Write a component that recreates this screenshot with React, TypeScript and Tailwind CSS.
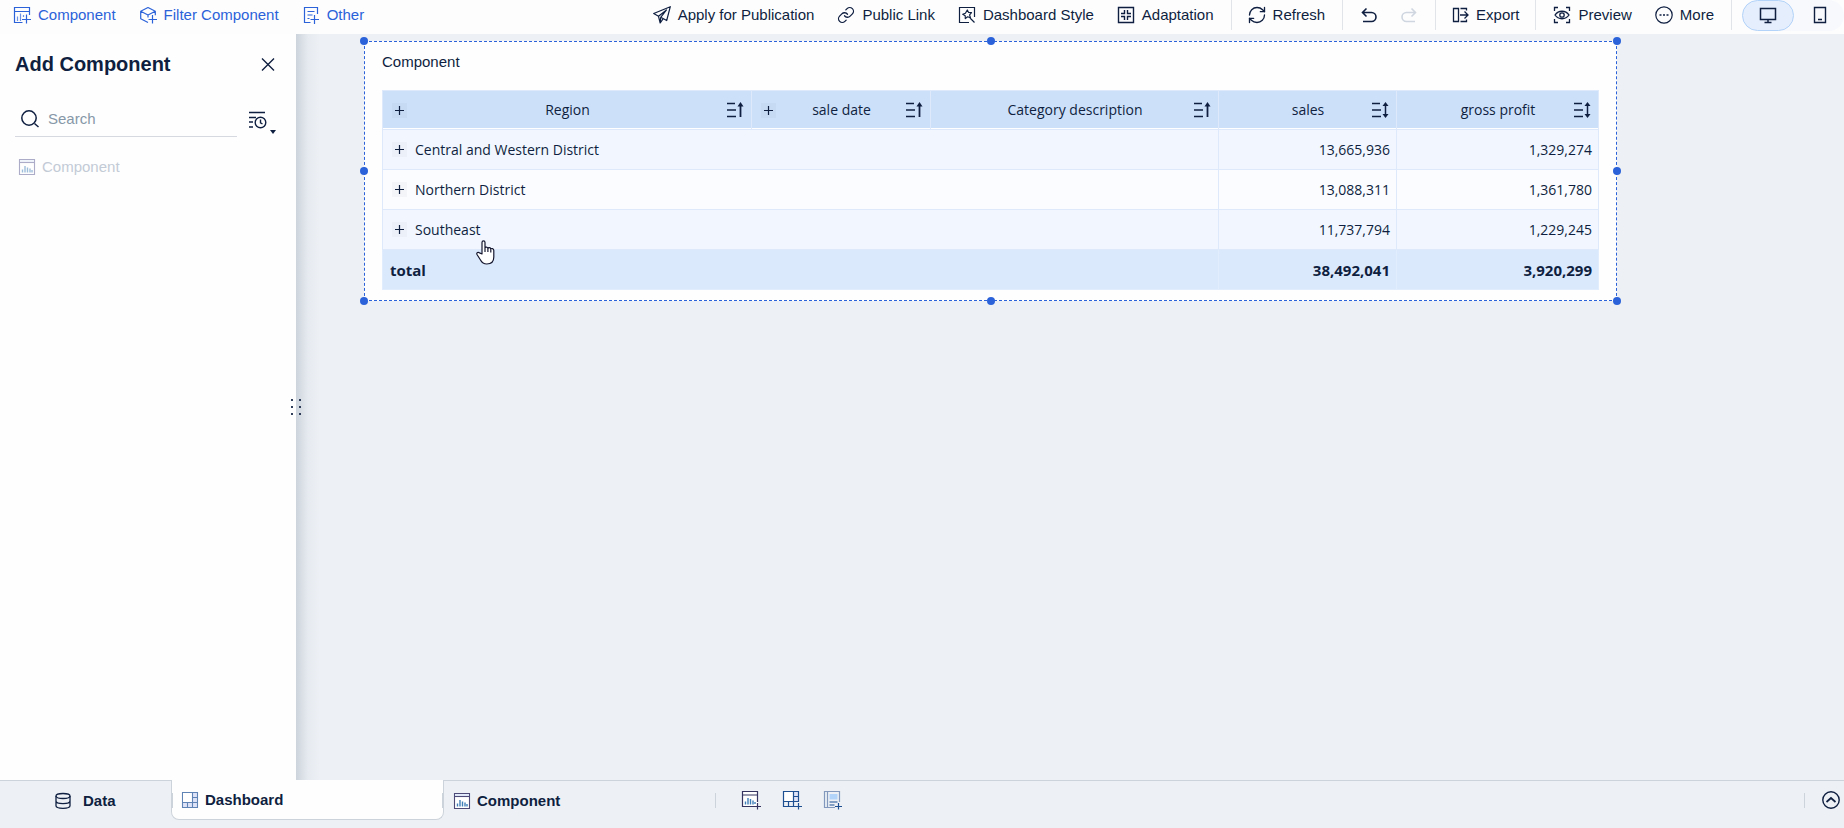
import { useState } from "react";
import type { ReactNode } from "react";
import { Link, RefreshCw } from "lucide-react";

type IconProps = { size?: number; children: ReactNode; width?: number };

function Icon({ size = 16, width = 1.2, children }: IconProps) {
	return (
		<svg
			width={size}
			height={size}
			viewBox={`0 0 ${size} ${size}`}
			fill="none"
			stroke="currentColor"
			strokeWidth={width}
			className="shrink-0 overflow-visible"
			aria-hidden="true"
		>
			{children}
		</svg>
	);
}

const AddChartIcon = () => (
	<Icon>
		<path d="M15.500 8V.500H.500v15h8M.500 4.500h15M12.500 7.500v9M8 12.500h9" />
		<path d="M3.500 14V9.500M6.500 14V6.500M9.500 10V8" opacity="0.7" />
	</Icon>
);

const AddFilterIcon = () => (
	<Icon>
		<path d="M8 15.500.700 11.700V4.200L8 .500l7.300 3.700v4M.700 4.200 8 8l7.300-3.800M8 8v2.500M12.500 8v8.500M8.500 12.500h8.500" strokeLinejoin="round" />
	</Icon>
);

const AddOtherIcon = () => (
	<Icon>
		<path d="M14.500 7V.500H1.500v15h6M4.500 4.500h7M4.500 8h5M4.500 11.500h2M11.500 8v9M7.500 12.500h8.500" />
	</Icon>
);

const SendIcon = () => (
	<Icon size={18}>
		<path d="M17.300.700.700 7.500l4.800 2.800 8-6.300-5.800 7.300 6 3.200zM7.700 11.300 7.200 17l3-4.400M5.500 10.300l1.700 6.700" strokeLinejoin="round" />
	</Icon>
);

const StyleIcon = () => (
	<Icon>
		<path d="M15.500 10V.500H.500v15H10" />
		<path d="m8.300 3 1.300 2.500 2.900.2-1.900 2.200.8 2.800-2.800-.9-2.300 1.800-.1-2.900L3.700 7.300l2.700-1.100zM11 11l4.500 4.500" strokeLinejoin="round" width="1.400" />
	</Icon>
);

const AdaptIcon = () => (
	<Icon width={1.400}>
		<path d="M.500.500h15v15H.500zM6.500 3v3.500H3M9.500 3v3.500H13M6.500 13V9.500H3M9.500 13V9.500H13" />
	</Icon>
);

const UndoIcon = () => (
	<Icon width={1.600}>
		<path d="M5.500 1.500 1.500 5.500l4 4M1.800 5.500h8.700a4.500 4.500 0 0 1 0 9H2" />
	</Icon>
);

const RedoIcon = () => (
	<Icon width={1.600}>
		<path d="m10.500 1.500 4 4-4 4M14.200 5.500H5.500a4.500 4.500 0 0 0 0 9H14" />
	</Icon>
);

const ExportIcon = () => (
	<Icon width={1.300}>
		<path d="M6.500 1.500h-5v13h5zM8.500 1.500h6v2M8.500 14.500h6v-2M8 8h8M12.500 4.500 16 8l-3.500 3.500" />
	</Icon>
);

const PreviewIcon = () => (
	<Icon width={1.300}>
		<path d="M.500 4V.500H4M12 .500h3.500V4M.500 12v3.500H4M12 15.500h3.500V12M1 8c3.500-5 10.500-5 14 0-3.500 5-10.500 5-14 0z" />
		<circle cx="8" cy="8" r="2.200" />
	</Icon>
);

const MoreIcon = () => (
	<Icon size={18}>
		<circle cx="9" cy="9" r="8.200" />
		<path d="M4.500 9h2M8 9h2M11.500 9h2" strokeWidth="1.600" />
	</Icon>
);

const DesktopIcon = () => (
	<Icon width={1.500}>
		<path d="M.500 1.500h15v11H.500zM8 12.500v3M4.500 15.500h7" />
	</Icon>
);

const PhoneIcon = () => (
	<Icon width={1.400}>
		<path d="M2.500.500h11v15h-11zM6 12.500h4" />
	</Icon>
);

const ChartIcon = () => (
	<Icon width={1.100}>
		<path d="M.500.500h15v15H.500z" fill="white" />
		<path d="M1 1h14v2.500H1z" fill="#e3ecfa" stroke="none" />
		<path d="M.500 3.500h15" />
		<path d="M3.500 13.500v-3M6 13.500V7M8.500 13.500V8.500M11 13.500v-4M13 13.500v-2.500" stroke="#3f7fb8" strokeWidth="1.400" />
	</Icon>
);

const GridIcon = () => (
	<Icon width={1.100}>
		<path d="M.500.500h15v15H.500z" fill="#dfe3f8" />
		<path d="M1 1h9.500v9.500H1z" fill="white" stroke="none" />
		<path d="M10.500.500v10M.500 10.500h15M10.500 5.500h5M5.500 10.500v5M10.500 10.500v5" />
	</Icon>
);

const DatabaseIcon = () => (
	<Icon width={1.300}>
		<ellipse cx="8" cy="3" rx="7" ry="2.500" />
		<path d="M1 3v9.800c0 1.400 3 2.500 7 2.500s7-1.100 7-2.500V3M1 8c0 1.400 3 2.600 7 2.600S15 9.400 15 8" />
	</Icon>
);

const NewChartIcon = () => (
	<Icon size={18} width={1.200}>
		<path d="M.500.500h15v15H.500z" fill="white" stroke="none" />
		<path d="M15.500 11V.500H.500v15H12M.500 4h15M15.500 12v6.500M12 15.500h7" />
		<path d="M3.500 13.500v-3M6 13.500V7M8.500 13.500V8M11 13.500V9.500M13 13v-2" stroke="#3f7fb8" strokeWidth="1.400" />
	</Icon>
);

const NewGridIcon = () => (
	<Icon size={18} width={1.200}>
		<path d="M11 1h5v9h-5z" fill="#dfe3f8" stroke="none" />
		<path d="M1 1h10v10H1z" fill="white" stroke="none" />
		<path d="M15.500 11V.500H.500v15H12M10.500.500v10M.500 10.500h15M10.500 5.500h5M5.500 10.500v5M10.500 10.500v5M15.500 12v6.500M12 15.500h7" />
	</Icon>
);

const NewReportIcon = () => (
	<Icon size={18} width={1.200}>
		<path d="M15.500 11V.500H.500v16H11M3.500.500v16" stroke="#8299bd" />
		<path d="M5.500 3h8v5.500h-8z" fill="#b3d4fa" stroke="none" />
		<path d="M5.500 11h8M5.500 14h5M14.500 12v6.500M11 15.500h7" />
	</Icon>
);

function SortIcon({ both }: { both?: boolean }) {
	return (
		<Icon width={1.500}>
			<path d="M0 1.500h8M0 8h9M0 14.500h9" />
			{both ? (
				<>
					<path d="M13.500 2v12" />
					<path d="m13.500 0 3 4h-6zM13.500 16l3-4h-6z" fill="currentColor" stroke="none" />
				</>
			) : (
				<>
					<path d="M13.500 3v12" strokeWidth="1.800" />
					<path d="m13.500 0 3 4.500h-6z" fill="currentColor" stroke="none" />
				</>
			)}
		</Icon>
	);
}

function ExpandButton({ label }: { label: string }) {
	return (
		<button
			type="button"
			aria-label={`Expand ${label}`}
			className="flex h-[15px] w-[15px] shrink-0 items-center justify-center bg-[#1f2937]/3"
		>
			<svg width="9" height="9" viewBox="0 0 9 9" stroke="currentColor" strokeWidth="1.200" aria-hidden="true">
				<path d="M4.500 0v9M0 4.500h9" />
			</svg>
		</button>
	);
}

function ToolButton({ icon, children }: { icon: ReactNode; children: ReactNode }) {
	return (
		<button type="button" className="flex items-center gap-2 whitespace-nowrap">
			<span className="flex w-4 justify-center">{icon}</span>
			{children}
		</button>
	);
}

const Divider = () => <span className="h-[30px] w-px bg-[#e1e4e9]" />;

const columns = [
	{ title: "Region", expand: true, both: false },
	{ title: "sale date", expand: true, both: false },
	{ title: "Category description", expand: false, both: false },
	{ title: "sales", expand: false, both: true },
	{ title: "gross profit", expand: false, both: true },
];

const rows = [
	{ region: "Central and Western District", sales: "13,665,936", profit: "1,329,274" },
	{ region: "Northern District", sales: "13,088,311", profit: "1,361,780" },
	{ region: "Southeast", sales: "11,737,794", profit: "1,229,245" },
];

// Resize handles around the selected widget
const handles = [
	"left-0 top-0",
	"left-1/2 top-0",
	"left-full top-0",
	"left-0 top-1/2",
	"left-full top-1/2",
	"left-0 top-full",
	"left-1/2 top-full",
	"left-full top-full",
];

function TopBar() {
	return (
		<header className="flex h-[34px] shrink-0 items-start justify-between bg-[#fdfdfe]">
			<div className="flex h-[30px] items-center gap-6 pl-[14px] text-[#2b62d9]">
				<ToolButton icon={<AddChartIcon />}>Component</ToolButton>
				<ToolButton icon={<AddFilterIcon />}>Filter Component</ToolButton>
				<ToolButton icon={<AddOtherIcon />}>Other</ToolButton>
			</div>
			<div className="flex h-[30px] items-center">
				<div className="flex items-center gap-6 pr-[17px]">
					<ToolButton icon={<SendIcon />}>Apply for Publication</ToolButton>
					<ToolButton icon={<Link size={18} strokeWidth={1.7} className="shrink-0" />}>Public Link</ToolButton>
					<ToolButton icon={<StyleIcon />}>Dashboard Style</ToolButton>
					<ToolButton icon={<AdaptIcon />}>Adaptation</ToolButton>
				</div>
				<Divider />
				<div className="px-[17px]">
					<ToolButton icon={<RefreshCw size={20} strokeWidth={1.6} className="shrink-0" />}>Refresh</ToolButton>
				</div>
				<Divider />
				<div className="flex items-center gap-6 px-[18px]">
					<button type="button" aria-label="Undo"><UndoIcon /></button>
					<button type="button" aria-label="Redo" disabled className="text-[#cfd6df]"><RedoIcon /></button>
				</div>
				<Divider />
				<div className="px-4">
					<ToolButton icon={<ExportIcon />}>Export</ToolButton>
				</div>
				<Divider />
				<div className="flex items-center gap-6 pr-[17px] pl-[18px]">
					<ToolButton icon={<PreviewIcon />}>Preview</ToolButton>
					<ToolButton icon={<MoreIcon />}>More</ToolButton>
				</div>
				<Divider />
				<div className="ml-[10px] flex h-[31px] rounded-full bg-[#f7f9fd]">
					<button
						type="button"
						aria-label="Desktop layout"
						className="flex w-[52px] items-center justify-center rounded-full border border-[#b3d3f8] bg-[#e5eefd]"
					>
						<DesktopIcon />
					</button>
					<button type="button" aria-label="Mobile layout" className="flex w-[50px] items-center justify-center pl-px">
						<PhoneIcon />
					</button>
				</div>
			</div>
		</header>
	);
}

function SidePanel() {
	const [keyword, setKeyword] = useState("");

	return (
		<aside className="relative flex w-[296px] shrink-0 flex-col bg-[#fefefe] pl-[15px]">
			<div className="flex h-[60px] items-center justify-between pr-5">
				<h2 className="text-[20px] leading-6 font-bold">Add Component</h2>
				<button type="button" aria-label="Close">
					<Icon width={1.400}>
						<path d="m2 2.500 12 12M14 2.500 2 14.500" />
					</Icon>
				</button>
			</div>
			<div className="mt-[7px] flex items-center">
				<label className="flex h-9 w-[222px] items-center gap-[9px] border-b border-[#d6d9df] pl-[6px]">
					<Icon size={18} width={1.500}>
						<circle cx="8" cy="8" r="7.200" />
						<path d="m13.500 13.500 4 3.500" />
					</Icon>
					<input
						type="text"
						aria-label="Search"
						placeholder="Search"
						value={keyword}
						onChange={(e) => setKeyword(e.target.value)}
						className="w-full bg-transparent outline-none placeholder:text-[#8798a8]"
					/>
				</label>
				<button type="button" aria-label="Sort by time" className="ml-3 flex items-end pt-1">
					<Icon size={18} width={1.400}>
						<path d="M0 .500h16M0 5.500h7M0 10h4M0 15h4" />
						<circle cx="11.500" cy="10.500" r="5.300" />
						<path d="M11.500 7.500v3.300l2 1.200" />
					</Icon>
					<svg width="6" height="4" viewBox="0 0 6 4" className="-mb-1 ml-[3px]" fill="currentColor" aria-hidden="true">
						<path d="M0 0h6L3 4z" />
					</svg>
				</button>
			</div>
			<button type="button" disabled className="mt-5 flex items-center gap-[7px] pl-1 text-[#c3cbd6]">
				<span className="text-[#5d5a94] opacity-50"><ChartIcon /></span>
				Component
			</button>
			{/* Soft edge over the canvas */}
			<div className="pointer-events-none absolute inset-y-0 left-full w-6 bg-linear-to-r from-[#5b6b7b]/22 via-[#7a8694]/6 to-transparent" />
			{/* Drag handle sits on the panel edge */}
			<svg className="absolute top-[364px] -right-[5px]" width="10" height="17" fill="currentColor" aria-hidden="true">
				<path d="M0 1h2v2H0zM8 1h2v2H8zM0 8h2v2H0zM8 8h2v2H8zM0 15h2v2H0zM8 15h2v2H8z" opacity="0.85" />
			</svg>
		</aside>
	);
}

function PivotTable() {
	return (
		<table className="w-full table-fixed border-collapse border border-[#deeafc] font-['Open_Sans','Noto_Sans',sans-serif] text-[14px] leading-5">
			<colgroup>
				<col />
				<col className="w-[179px]" />
				<col className="w-[288px]" />
				<col className="w-[178px]" />
				<col className="w-[202px]" />
			</colgroup>
			<thead>
				<tr className="h-[39px] bg-[#cde0fa] shadow-[inset_0_-2px_0_white]">
					{columns.map((col) => (
						<th key={col.title} scope="col" className="border border-[#deeafc] p-0 font-normal">
							<div className="grid grid-cols-[1fr_auto_1fr] items-center pr-2 pl-[9px]">
								<span>{col.expand && <ExpandButton label={col.title} />}</span>
								<span>{col.title}</span>
								<button type="button" aria-label={`Sort ${col.title}`} className="justify-self-end">
									<SortIcon both={col.both} />
								</button>
							</div>
						</th>
					))}
				</tr>
			</thead>
			<tbody>
				{rows.map((row) => (
					<tr key={row.region} className="h-10 odd:bg-[#f2f7ff] even:bg-[#fafcff]">
						<td colSpan={3} className="border border-[#deeafc] p-0">
							<div className="flex items-center gap-2 pl-[9px]">
								<ExpandButton label={row.region} />
								{row.region}
							</div>
						</td>
						<td className="border border-[#deeafc] p-0 pr-[6px] text-right">{row.sales}</td>
						<td className="border border-[#deeafc] p-0 pr-[6px] text-right">{row.profit}</td>
					</tr>
				))}
			</tbody>
			<tfoot>
				<tr className="h-10 bg-[#dbe9fd] text-[15px]">
					<th scope="row" colSpan={3} className="border border-[#e1ecfd] p-0 pl-[7px] text-left font-bold">total</th>
					<td className="border border-[#e1ecfd] p-0 pr-[6px] text-right font-bold">38,492,041</td>
					<td className="border border-[#e1ecfd] p-0 pr-[6px] text-right font-bold">3,920,299</td>
				</tr>
			</tfoot>
		</table>
	);
}

function BottomBar() {
	return (
		<footer className="flex h-12 shrink-0 items-start justify-between bg-[#edf1f6] font-bold">
			<nav className="flex flex-1">
				<button type="button" className="flex h-10 w-[171px] items-center gap-3 border-t border-[#cdd3da] pl-[55px]">
					<DatabaseIcon />
					Data
				</button>
				<button
					type="button"
					aria-current="page"
					className="flex h-10 w-[273px] items-center justify-between rounded-b-lg border-x border-b border-[#cdd3da] bg-[#fefefe] pt-px"
				>
					<span className="h-[15px] w-px bg-[#cdd3da]" />
					<span className="flex flex-1 items-center gap-[7px] pl-[9px]">
						<span className="text-[#5f83b5]"><GridIcon /></span>
						Dashboard
					</span>
					<span className="h-[15px] w-px bg-[#cdd3da]" />
				</button>
				<button type="button" className="flex h-10 w-[271px] items-center gap-[7px] border-t border-[#cdd3da] pl-[10px]">
					<span className="text-[#4d4a78]"><ChartIcon /></span>
					Component
				</button>
				<div className="flex h-10 flex-1 items-center border-t border-[#cdd3da]">
					<span className="h-[15px] w-px bg-[#cdd3da]" />
					<div className="ml-[26px] flex items-center gap-[23px] pb-px text-[#1d4f91]">
						<button type="button" aria-label="New component" className="text-[#353461]"><NewChartIcon /></button>
						<button type="button" aria-label="New dashboard"><NewGridIcon /></button>
						<button type="button" aria-label="New report"><NewReportIcon /></button>
					</div>
				</div>
			</nav>
			<div className="flex h-10 items-center gap-[17px] border-t border-[#cdd3da] pr-1 pb-px">
				<span className="h-[15px] w-px bg-[#cdd3da]" />
				<button type="button" aria-label="Expand bar">
					<Icon size={18} width={1.400}>
						<circle cx="9" cy="9" r="8.200" />
						<path d="m4.500 11 4.500-4 4.500 4" strokeWidth="1.700" />
					</Icon>
				</button>
			</div>
		</footer>
	);
}

export default function App() {
	return (
		<div className="flex min-h-screen flex-col bg-[#edf1f6] font-['Liberation_Sans',Arial,sans-serif] text-[15px] leading-5 text-[#0f1f40]">
			<TopBar />
			<div className="flex flex-1">
				<SidePanel />
				<main className="min-w-0 flex-1 pt-[7px] pr-[227px] pl-[68px]">
					<section className="relative border border-dashed border-[#2b62d9] bg-[#fefefe] px-[17px] pt-[10px] pb-[10px]">
						<h3 className="mb-[18px]">Component</h3>
						<PivotTable />
						<div className="pointer-events-none absolute -inset-px">
							{handles.map((place) => (
								<span
									key={place}
									className={`absolute h-2 w-2 -translate-x-1/2 -translate-y-1/2 rounded-full bg-[#2b62d9] ${place}`}
								/>
							))}
						</div>
						{/* Pointer over the last region */}
						<svg
							className="absolute top-[198px] left-[111px]"
							width="19"
							height="25"
							viewBox="0 0 19 25"
							fill="white"
							stroke="#14162e"
							strokeWidth="1.200"
							strokeLinejoin="round"
							aria-hidden="true"
						>
							<path d="M6 14V2.500C6 .300 9 .300 9 2.500V8c.3-1.500 2.800-1.200 2.900.5.400-1.300 2.700-1 2.900.600.500-1 3-.700 3 1.400V17c0 4-2.300 7-7 7-3.500 0-5-1.500-6.300-4L1 14.500c-.8-1.800 1.200-2.800 2.500-1.600zM9 8v4M11.900 8.500V12M14.800 9.500V12.500" />
						</svg>
					</section>
				</main>
			</div>
			<BottomBar />
		</div>
	);
}
